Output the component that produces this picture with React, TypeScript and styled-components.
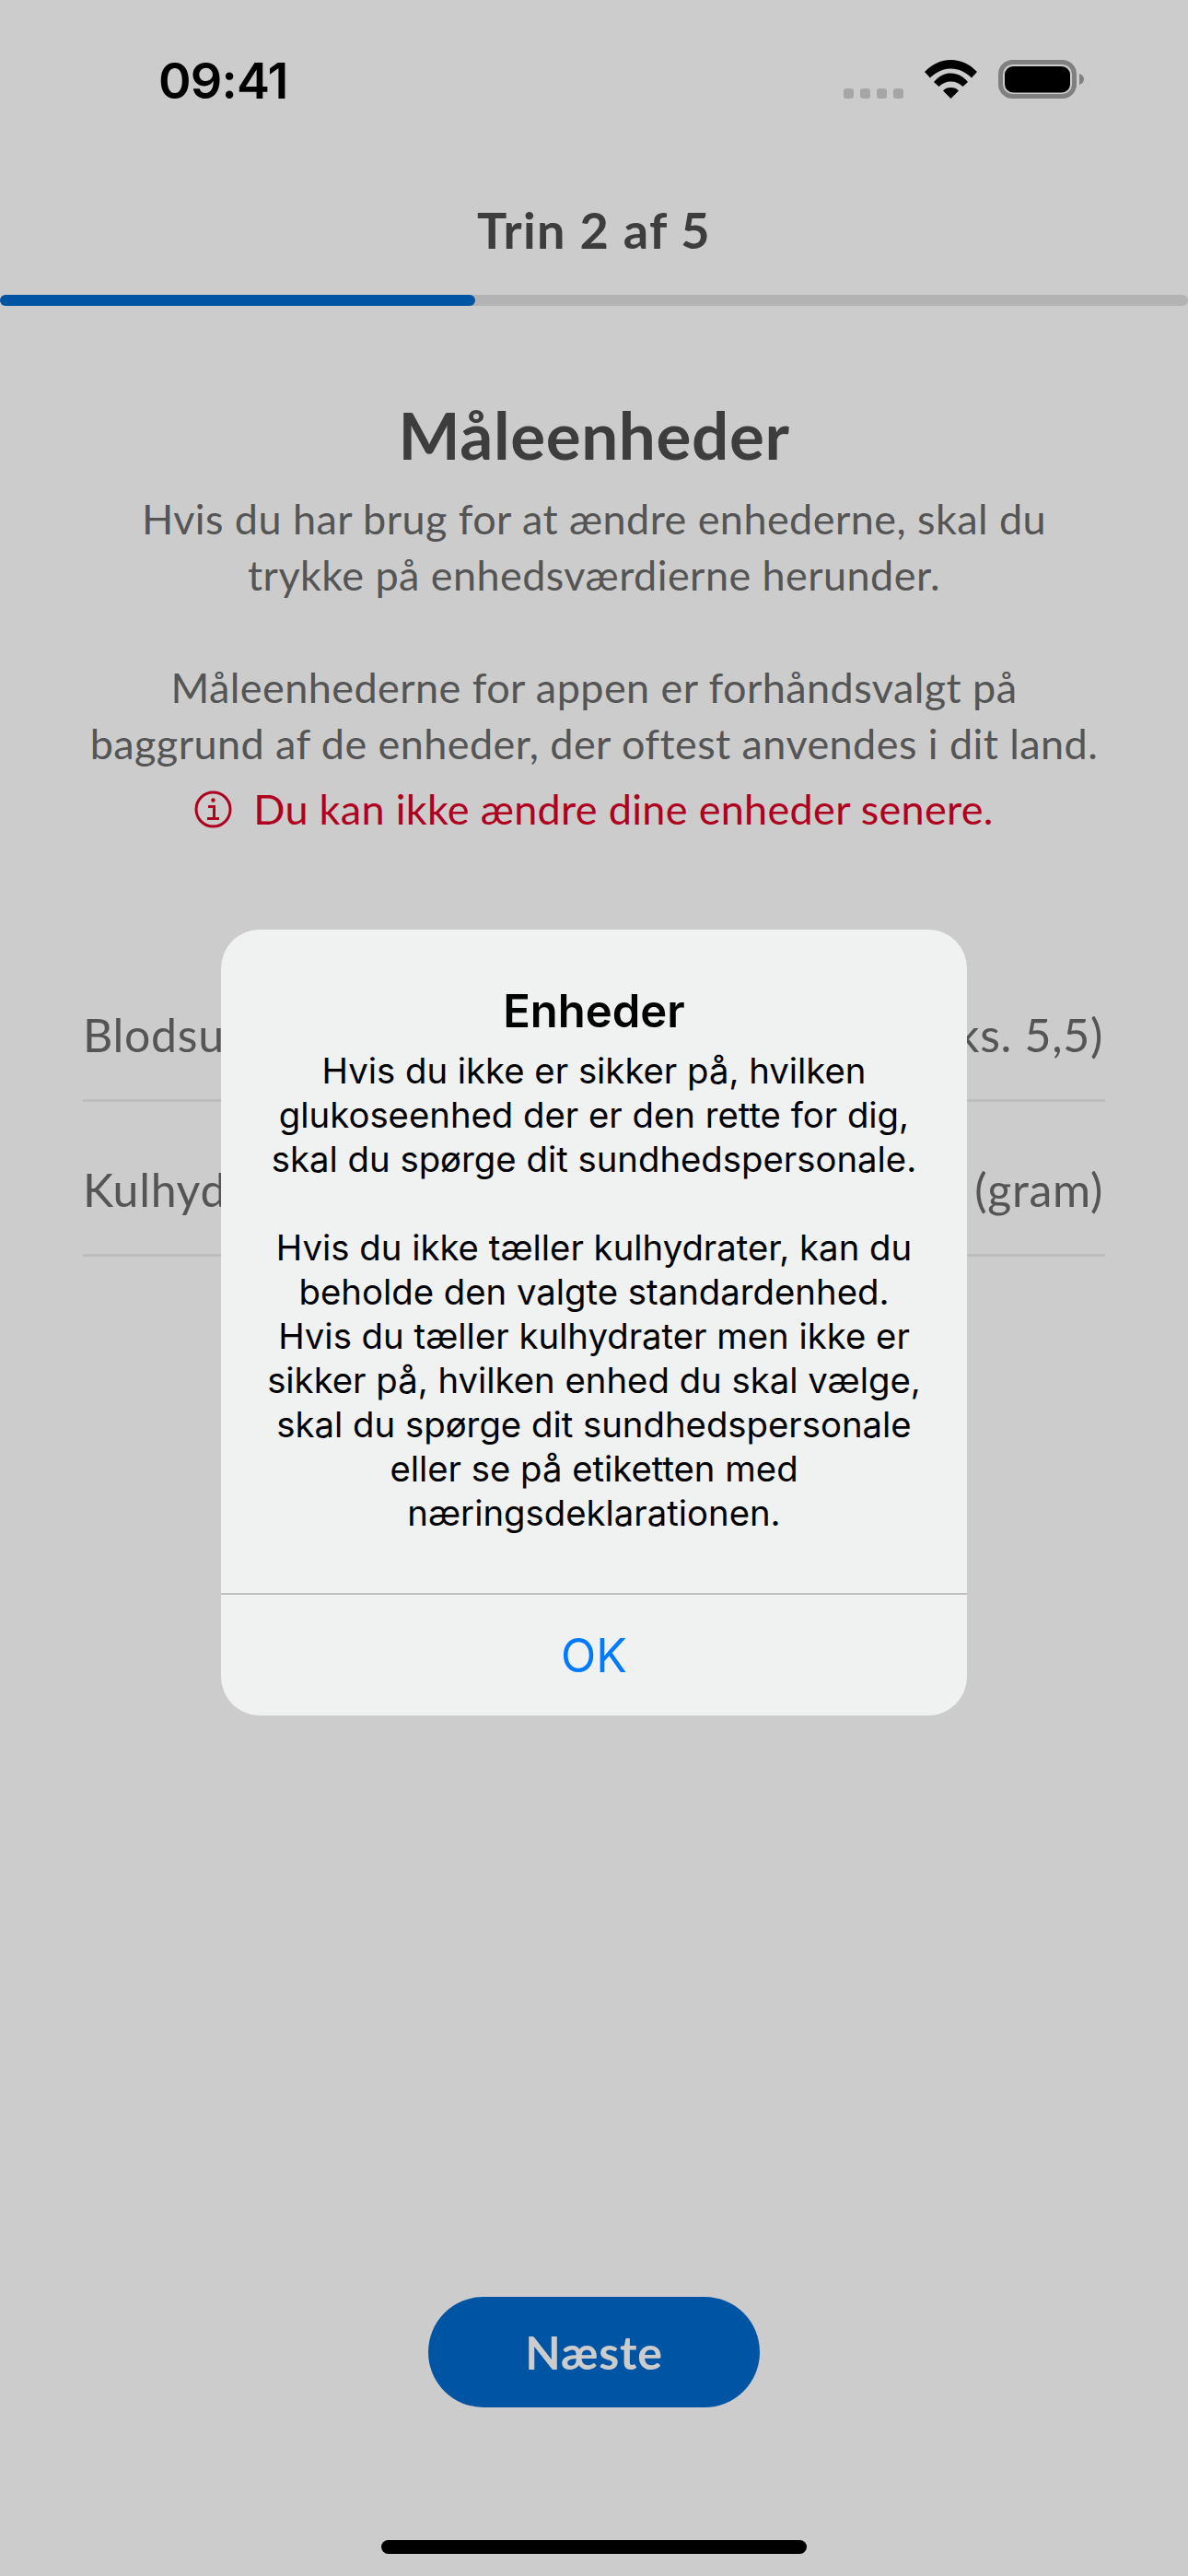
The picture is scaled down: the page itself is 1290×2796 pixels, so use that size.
import React from "react";
import styled, { createGlobalStyle } from "styled-components";

const Global = createGlobalStyle`
  html, body { margin: 0; padding: 0; background: #cccccc; }
  * { box-sizing: border-box; }
`;

const appFont = `"Lato", "Noto Sans", sans-serif`;
const sysFont = `"Inter", "Liberation Sans", sans-serif`;

const Screen = styled.div`
  position: relative;
  width: 1290px;
  height: 2796px;
  background: #cccccc;
  overflow: hidden;
  display: flex;
  flex-direction: column;
  font-family: ${appFont};
`;

const StatusBar = styled.div`
  height: 65px;
  margin-top: 55px;
  padding: 0 113px 0 172px;
  display: flex;
  align-items: flex-start;
  justify-content: space-between;
`;

const Time = styled.div`
  font-family: ${sysFont};
  font-weight: 600;
  font-size: 54px;
  line-height: 65px;
  color: #000;
  letter-spacing: -0.8px;
`;

const StatusIcons = styled.div`
  display: flex;
  align-items: flex-end;
  height: 42px;
  margin-top: 10px;
  gap: 23px;
`;

const Cells = styled.div`
  display: flex;
  gap: 7px;
`;

const Cell = styled.span`
  width: 11px;
  height: 11px;
  border-radius: 3px;
  background: #a6a6a6;
`;

const StepTitle = styled.div`
  height: 80px;
  margin-top: 90px;
  text-align: center;
  font-weight: 700;
  font-size: 54px;
  line-height: 80px;
  letter-spacing: 1.4px;
  color: #3d3d3d;
`;

const Track = styled.div`
  height: 12px;
  margin-top: 30px;
  border-radius: 6px;
  background: #b3b3b3;
`;

const Fill = styled.div`
  height: 100%;
  border-radius: 6px;
  background: #0054a4;
`;

const Content = styled.div`
  padding: 0 90px;
  display: flex;
  flex-direction: column;
  align-items: stretch;
`;

const Heading = styled.h1`
  margin: 95px 0 0;
  text-align: center;
  font-weight: 700;
  font-size: 71px;
  line-height: 90px;
  letter-spacing: 0.6px;
  color: #3d3d3d;
`;

const Paragraph = styled.p<{ $top: number }>`
  margin: ${(p) => p.$top}px -20px 0;
  text-align: center;
  font-size: 45px;
  font-weight: 400;
  line-height: 61px;
  letter-spacing: 0.42px;
  color: #555555;
`;

const Warning = styled.div`
  margin-top: 10px;
  display: flex;
  justify-content: center;
  align-items: center;
  gap: 23px;
  font-size: 45px;
  line-height: 61px;
  letter-spacing: 0.3px;
  color: #b00020;
`;

const Rows = styled.div`
  margin-top: 119px;
`;

const Row = styled.div`
  height: 168px;
  padding: 24px 2px 0 0;
  display: flex;
  align-items: center;
  justify-content: space-between;
  border-bottom: 3px solid #bdbdbd;
  font-size: 50px;
  letter-spacing: 0.7px;
  color: #555555;
`;

const Footer = styled.div`
  margin-top: auto;
  display: flex;
  flex-direction: column;
  align-items: center;
`;

const NextButton = styled.button`
  width: 360px;
  height: 120px;
  border: 0;
  border-radius: 60px;
  background: #0054a4;
  color: #cccccc;
  font-family: ${appFont};
  font-weight: 700;
  font-size: 50px;
  letter-spacing: 0.8px;
`;

const HomeIndicator = styled.div`
  width: 462px;
  height: 15px;
  margin: 144px 0 24px;
  border-radius: 8px;
  background: #000;
`;

const Dialog = styled.div`
  position: absolute;
  left: 240px;
  top: 1009px;
  width: 810px;
  height: 853px;
  border-radius: 42px;
  background: #f0f1f1;
  display: flex;
  flex-direction: column;
  color: #000;
  font-family: ${sysFont};
`;

const DialogBody = styled.div`
  flex: 1;
  padding: 58px 40px 0;
  text-align: center;
`;

const DialogTitle = styled.div`
  font-weight: 600;
  font-size: 49px;
  line-height: 62px;
`;

const DialogText = styled.div`
  margin-top: 9px;
  font-size: 38.3px;
  line-height: 48px;
`;

const DialogAction = styled.div`
  height: 133px;
  border-top: 2px solid #bfbfbf;
  display: flex;
  align-items: center;
  justify-content: center;
  font-size: 50px;
  color: #007aff;
`;

const WifiIcon = () => (
  <svg width="57" height="42" viewBox="0 0 57 42" fill="#000">
    <path d="M0 13C7.5 5 17.5 0 28.5 0S49.500 5 57 13L51 19.500C45 13.500 37 9.500 28.500 9.500S12 13.500 6 19.500Z" />
    <path d="M10 24C15 18 21 14.500 28.500 14.500S42 18 47 24L41.500 29C38 25.500 33.500 23.500 28.500 23.500S19 25.500 15.500 29Z" />
    <path d="M20 33.500C22 31 25 30 28.500 30S35 31 37 33.500L28.500 42Z" />
  </svg>
);

const BatteryIcon = () => (
  <svg width="93" height="42" viewBox="0 0 93 42">
    <rect x="2.500" y="2.500" width="80" height="37" rx="13" fill="none" stroke="#808080" strokeWidth="5" />
    <rect x="7" y="7" width="71" height="28.500" rx="9" fill="#000" />
    <path d="M88 15C91 16 93 18 93 21S91 26 88 27Z" fill="#808080" />
  </svg>
);

const InfoIcon = () => (
  <svg width="41" height="41" viewBox="0 0 41 41" fill="none" stroke="#b00020">
    <circle cx="20.500" cy="20.500" r="18.500" strokeWidth="3" />
    <circle cx="20.500" cy="10.500" r="2.200" fill="#b00020" stroke="none" />
    <path d="M15 17.500H21.500V30M14 30.500H27" strokeWidth="3" />
  </svg>
);

export default function App() {
  return (
    <Screen>
      <Global />
      <StatusBar>
        <Time>09:41</Time>
        <StatusIcons>
          <Cells>
            <Cell />
            <Cell />
            <Cell />
            <Cell />
          </Cells>
          <WifiIcon />
          <BatteryIcon />
        </StatusIcons>
      </StatusBar>
      <StepTitle>Trin 2 af 5</StepTitle>
      <Track>
        <Fill style={{ width: `${(516 / 1290) * 100}%` }} />
      </Track>
      <Content>
        <Heading>Måleenheder</Heading>
        <Paragraph $top={16}>
          Hvis du har brug for at ændre enhederne, skal du
          <br />
          trykke på enhedsværdierne herunder.
        </Paragraph>
        <Paragraph $top={61}>
          Måleenhederne for appen er forhåndsvalgt på
          <br />
          baggrund af de enheder, der oftest anvendes i dit land.
        </Paragraph>
        <Warning>
          <InfoIcon />
          <span>Du kan ikke ændre dine enheder senere.</span>
        </Warning>
        <Rows>
          <Row>
            <span>Blodsukker</span>
            <span>mmol/L (f.eks. 5,5)</span>
          </Row>
          <Row>
            <span>Kulhydrater</span>
            <span>g (gram)</span>
          </Row>
        </Rows>
      </Content>
      <Footer>
        <NextButton>Næste</NextButton>
        <HomeIndicator />
      </Footer>
      <Dialog>
        <DialogBody>
          <DialogTitle>Enheder</DialogTitle>
          <DialogText>
            Hvis du ikke er sikker på, hvilken
            <br />
            glukoseenhed der er den rette for dig,
            <br />
            skal du spørge dit sundhedspersonale.
            <br />
            <br />
            Hvis du ikke tæller kulhydrater, kan du
            <br />
            beholde den valgte standardenhed.
            <br />
            Hvis du tæller kulhydrater men ikke er
            <br />
            sikker på, hvilken enhed du skal vælge,
            <br />
            skal du spørge dit sundhedspersonale
            <br />
            eller se på etiketten med
            <br />
            næringsdeklarationen.
          </DialogText>
        </DialogBody>
        <DialogAction>OK</DialogAction>
      </Dialog>
    </Screen>
  );
}
